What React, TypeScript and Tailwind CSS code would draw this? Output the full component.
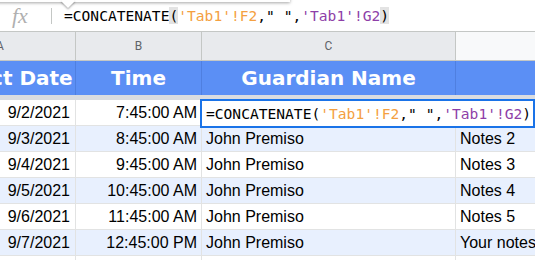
import React from "react";

const rows = [
  { date: "9/2/2021", time: "7:45:00 AM", name: "", notes: "" },
  { date: "9/3/2021", time: "8:45:00 AM", name: "John Premiso", notes: "Notes 2" },
  { date: "9/4/2021", time: "9:45:00 AM", name: "John Premiso", notes: "Notes 3" },
  { date: "9/5/2021", time: "10:45:00 AM", name: "John Premiso", notes: "Notes 4" },
  { date: "9/6/2021", time: "11:45:00 AM", name: "John Premiso", notes: "Notes 5" },
  { date: "9/7/2021", time: "12:45:00 PM", name: "John Premiso", notes: "Your notes" },
  { date: "9/8/2021", time: "1:45:00 PM", name: "John Premiso", notes: "" },
];

const cols = "grid grid-cols-[76px_126px_254px_1fr]";
const mono = { fontFamily: '"DejaVu Sans Mono", monospace' };

function Formula({ bar }: { bar?: boolean }) {
  const paren = bar ? "bg-[#e3e3e3]" : "";
  return (
    <span className="text-[14.6px] text-black whitespace-pre" style={mono}>
      {"=CONCATENATE"}
      <span className={paren}>(</span>
      <span className="text-[#f4a041]">{"'Tab1'!F2"}</span>
      {'," ",'}
      <span className="text-[#8e3fa8]">{"'Tab1'!G2"}</span>
      <span className={paren}>)</span>
    </span>
  );
}

export default function App() {
  return (
    <div className="relative w-[535px] h-[260px] overflow-hidden bg-white" style={{ fontFamily: '"Liberation Sans", Arial, sans-serif' }}>
      {/* ── Formula bar ── */}
      <div className="flex items-center h-[32px] border-b border-[#c4c7c5] bg-white">
        <span className="w-[51px] pl-[12px] text-[22px] italic text-[#b0b0b0] leading-none" style={{ fontFamily: '"Liberation Serif", serif' }}>
          fx
        </span>
        <span className="w-px h-[16px] bg-[#c4c7c5]" />
        <span className="pl-[12px]">
          <Formula bar />
        </span>
      </div>

      {/* ── Column letters ── */}
      <div className={`${cols} h-[29px] text-[12px] text-[#5f6368]`} style={{ fontFamily: "Roboto, sans-serif" }}>
        <div className="relative overflow-hidden bg-[#e8eaed] border-r border-b border-[#c4c7c5]">
          <div className="absolute left-[-75px] w-[150px] h-full flex items-center justify-center">A</div>
        </div>
        <div className="flex items-center justify-center bg-[#e8eaed] border-r border-b border-[#c4c7c5]">B</div>
        <div className="flex items-center justify-center bg-[#e8eaed] border-r border-b border-[#c4c7c5]">C</div>
        <div className="bg-[#f8f9fa] border-b border-[#c4c7c5]" />
      </div>

      {/* ── Blue header row ── */}
      <div className={`${cols} h-[39px] bg-[#5b8ff5] border-b-[5px] border-[#dadce0] text-white text-[20px] font-bold`} style={{ fontFamily: '"DejaVu Sans", sans-serif' }}>
        <div className="relative overflow-hidden border-r border-[#4f7fe0]">
          <div className="absolute left-[-76px] w-[150px] h-full flex items-center justify-center whitespace-nowrap">Contact Date</div>
        </div>
        <div className="flex items-center justify-center border-r border-[#4f7fe0]">Time</div>
        <div className="flex items-center justify-center border-r border-[#4f7fe0]">Guardian Name</div>
        <div />
      </div>

      {/* ── Data rows ── */}
      {rows.map((r, i) => (
        <div key={r.date} className={`${cols} h-[26px] text-[16px] text-black ${i % 2 ? "bg-[#e8f0fe]" : "bg-white"}`}>
          <div className="flex items-center justify-end pr-[5px] border-r border-b border-[#e2e3e3]">{r.date}</div>
          <div className="flex items-center justify-end pr-[4px] border-r border-b border-[#e2e3e3] whitespace-nowrap">{r.time}</div>
          <div className="flex items-center pl-[4px] border-r border-b border-[#e2e3e3]">{r.name}</div>
          <div className="flex items-center pl-[4px] border-b border-[#e2e3e3] whitespace-nowrap overflow-hidden">{r.notes}</div>
        </div>
      ))}

      {/* ── Cell editor ── */}
      <div className="absolute left-[200px] top-[99px] w-[335px] h-[29px] flex items-center pl-[4px] bg-white border-2 border-[#1a73e8]">
        <Formula />
      </div>

      {/* ── Tooltip edge ── */}
      <div className="absolute left-[-10px] top-[-20px] w-[300px] h-[22px] bg-white shadow-[0_1px_3px_rgba(0,0,0,0.35)]" />
      <div className="absolute left-[63px] top-[-4px] w-[10px] h-[10px] rotate-45 bg-white shadow-[1px_1px_2px_rgba(0,0,0,0.3)]" />
    </div>
  );
}
